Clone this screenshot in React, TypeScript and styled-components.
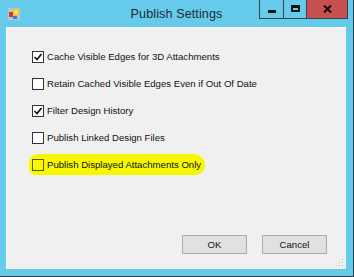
import React from "react";
import styled, { createGlobalStyle } from "styled-components";

const GlobalStyle = createGlobalStyle`
  html, body {
    margin: 0;
    padding: 0;
    background: #66cbea;
  }
  body {
    font-family: "Liberation Sans", Arial, sans-serif;
  }
`;

const Frame = styled.div`
  width: 354px;
  height: 277px;
  box-sizing: border-box;
  background: #66cbea;
  border-right: 1px solid #2c3b46;
  border-bottom: 1px solid #2c3b46;
  display: flex;
  flex-direction: column;
`;

const TitleBar = styled.div`
  height: 27px;
  display: grid;
  grid-template-columns: 1fr auto 1fr;
  align-items: start;
`;

const AppIcon = styled.div`
  padding: 8px 0 0 8px;
  display: flex;
`;

const Title = styled.div`
  font-size: 12.6px;
  color: #1d2a33;
  padding-top: 7px;
  letter-spacing: 0.1px;
`;

const Captions = styled.div`
  display: flex;
  justify-content: flex-end;
  padding-right: 5px;
`;

const CapButton = styled.div<{ $w: number; $close?: boolean }>`
  width: ${(p) => p.$w}px;
  height: 19px;
  box-sizing: border-box;
  border: 1px solid #34434e;
  border-top: none;
  margin-left: -1px;
  background: ${(p) => (p.$close ? "#c75050" : "#66cbea")};
  display: flex;
  align-items: center;
  justify-content: center;
`;

const MinBar = styled.div`
  width: 8px;
  height: 3px;
  background: #111;
  margin-top: 4px;
`;

const MaxBox = styled.div`
  width: 9px;
  height: 7px;
  box-sizing: border-box;
  border: 2px solid #111;
  border-top-width: 3px;
  margin-top: -2px;
`;

const Client = styled.div`
  position: relative;
  margin: 0 7px 0 6px;
  height: 242px;
  background: #f0f0f0;
  border-left: 1px solid #fbfbfb;
  border-top: 1px solid #fbfbfb;
  box-sizing: border-box;
  display: flex;
  flex-direction: column;
  padding: 15px 19px 15px 25px;
`;

const Options = styled.div`
  display: flex;
  flex-direction: column;
  align-items: flex-start;
`;

const Row = styled.label<{ $marked?: boolean }>`
  height: 27px;
  display: flex;
  align-items: center;
  gap: 3px;
  font-size: 9.6px;
  color: #111;
  ${(p) =>
    p.$marked &&
    `
    height: 21px;
    margin: 3px 0 0 -3px;
    padding: 0 4px 0 3px;
    background: #f7f700;
    border-radius: 9px 12px 10px 7px;
  `}
`;

const Box = styled.span<{ $marked?: boolean }>`
  width: 12px;
  height: 12px;
  box-sizing: border-box;
  border: 1px solid ${(p) => (p.$marked ? "#5d5a00" : "#333")};
  background: ${(p) => (p.$marked ? "#f7f700" : "#fff")};
  display: flex;
  align-items: center;
  justify-content: center;
`;

const Footer = styled.div`
  margin-top: auto;
  display: flex;
  justify-content: flex-end;
  gap: 15px;
`;

const Button = styled.div`
  width: 65px;
  height: 19px;
  box-sizing: border-box;
  border: 1px solid #adadad;
  background: #e1e1e1;
  font-size: 9.6px;
  color: #111;
  display: flex;
  align-items: center;
  justify-content: center;
`;

const Grip = styled.svg`
  position: absolute;
  right: 2px;
  bottom: 2px;
`;

const options = [
  { label: "Cache Visible Edges for 3D Attachments", checked: true },
  { label: "Retain Cached Visible Edges Even if Out Of Date", checked: false },
  { label: "Filter Design History", checked: true },
  { label: "Publish Linked Design Files", checked: false },
  { label: "Publish Displayed Attachments Only", checked: false, marked: true },
];

export default function App() {
  return (
    <>
      <GlobalStyle />
      <Frame>
        <TitleBar>
          <AppIcon>
            <svg width="12" height="12" viewBox="0 0 12 12">
              <rect x="0" y="0" width="12" height="12" fill="#b9c6cc" />
              <rect x="1" y="4" width="4" height="5" fill="#d23a2a" />
              <rect x="5" y="1" width="6" height="6" fill="#f2c019" />
              <rect x="6" y="2" width="4" height="4" fill="#ffe066" />
              <rect x="5" y="8" width="4" height="3" fill="#3d7be0" />
            </svg>
          </AppIcon>
          <Title>Publish Settings</Title>
          <Captions>
            <CapButton $w={25}>
              <MinBar />
            </CapButton>
            <CapButton $w={24}>
              <MaxBox />
            </CapButton>
            <CapButton $w={42} $close>
              <svg width="9" height="8" viewBox="0 0 9 8">
                <path d="M1 0.5 L8 7.5 M8 0.5 L1 7.5" stroke="#111" strokeWidth="2" />
              </svg>
            </CapButton>
          </Captions>
        </TitleBar>
        <Client>
          <Options>
            {options.map((o) => (
              <Row key={o.label} $marked={o.marked}>
                <Box $marked={o.marked}>
                  {o.checked && (
                    <svg width="10" height="10" viewBox="0 0 10 10">
                      <path d="M1.5 5 L4 7.5 L8.5 2" fill="none" stroke="#111" strokeWidth="1.7" />
                    </svg>
                  )}
                </Box>
                {o.label}
              </Row>
            ))}
          </Options>
          <Footer>
            <Button>OK</Button>
            <Button>Cancel</Button>
          </Footer>
          <Grip width="8" height="8" viewBox="0 0 8 8">
            <rect x="6" y="0" width="1" height="1" fill="#b5b5b5" />
            <rect x="3" y="3" width="1" height="1" fill="#b5b5b5" />
            <rect x="6" y="3" width="1" height="1" fill="#b5b5b5" />
            <rect x="0" y="6" width="1" height="1" fill="#b5b5b5" />
            <rect x="3" y="6" width="1" height="1" fill="#b5b5b5" />
            <rect x="6" y="6" width="1" height="1" fill="#b5b5b5" />
          </Grip>
        </Client>
      </Frame>
    </>
  );
}
